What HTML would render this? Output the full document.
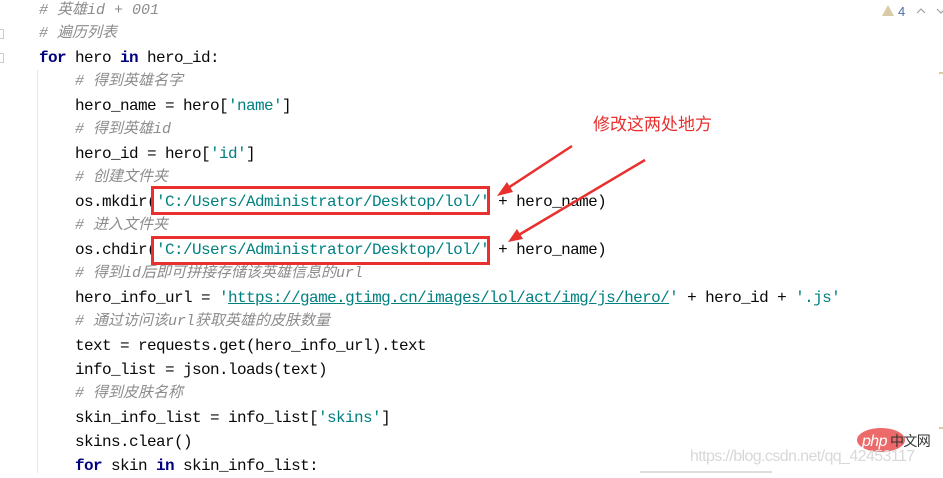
<!DOCTYPE html>
<html><head><meta charset="utf-8"><style>
body{margin:0;width:943px;height:473px;overflow:hidden;background:#fff;position:relative;font-family:"Liberation Mono","Noto Sans CJK SC",monospace;font-size:16px;letter-spacing:-0.6px;color:#080808}
.l{position:absolute;white-space:pre;height:24px;line-height:24px}
.c{color:#8c8c8c;font-style:italic;font-size:15px;letter-spacing:0}
.k{color:#000080;font-weight:bold}
.s{color:#008080}
.u{color:#008080;text-decoration:underline}
.box{position:absolute;border:3px solid #e8302e;box-sizing:border-box}
.guide{position:absolute;left:37px;top:70px;width:1px;height:403px;background:#e6e6e6}
</style></head><body>
<div class="guide"></div>
<div style="position:absolute;left:0;top:29px;width:3px;height:8px;border:1px solid #ccc;border-left:none"></div>
<div style="position:absolute;left:0;top:53px;width:3px;height:8px;border:1px solid #ccc;border-left:none"></div>
<div class="l c" style="left:39px;top:-1px"># 英雄id + 001</div>
<div class="l c" style="left:39px;top:22px"># 遍历列表</div>
<div class="l" style="left:39px;top:46px"><span class="k">for</span> hero <span class="k">in</span> hero_id:</div>
<div class="l c" style="left:75px;top:70px"># 得到英雄名字</div>
<div class="l" style="left:75px;top:94px">hero_name = hero[<span class="s">'name'</span>]</div>
<div class="l c" style="left:75px;top:118px"># 得到英雄id</div>
<div class="l" style="left:75px;top:142px">hero_id = hero[<span class="s">'id'</span>]</div>
<div class="l c" style="left:75px;top:166px"># 创建文件夹</div>
<div class="l" style="left:75px;top:190px">os.mkdir(<span class="s">'C:/Users/Administrator/Desktop/lol/'</span> + hero_name)</div>
<div class="l c" style="left:75px;top:214px"># 进入文件夹</div>
<div class="l" style="left:75px;top:238px">os.chdir(<span class="s">'C:/Users/Administrator/Desktop/lol/'</span> + hero_name)</div>
<div class="l c" style="left:75px;top:262px"># 得到id后即可拼接存储该英雄信息的url</div>
<div class="l" style="left:75px;top:286px">hero_info_url = <span class="s">'</span><span class="u">https://game.gtimg.cn/images/lol/act/img/js/hero/</span><span class="s">'</span> + hero_id + <span class="s">'.js'</span></div>
<div class="l c" style="left:75px;top:310px"># 通过访问该url获取英雄的皮肤数量</div>
<div class="l" style="left:75px;top:334px">text = requests.get(hero_info_url).text</div>
<div class="l" style="left:75px;top:358px">info_list = json.loads(text)</div>
<div class="l c" style="left:75px;top:382px"># 得到皮肤名称</div>
<div class="l" style="left:75px;top:406px">skin_info_list = info_list[<span class="s">'skins'</span>]</div>
<div class="l" style="left:75px;top:430px">skins.clear()</div>
<div class="l" style="left:75px;top:454px"><span class="k">for</span> skin <span class="k">in</span> skin_info_list:</div>
<div class="box" style="left:151px;top:186px;width:339px;height:29px"></div>
<div class="box" style="left:151px;top:236px;width:339px;height:29px"></div>
<div style="position:absolute;left:593px;top:110px;font-family:'Liberation Sans','Noto Sans CJK SC',sans-serif;font-size:17px;letter-spacing:0;color:#e8302e">修改这两处地方</div>
<svg width="943" height="473" style="position:absolute;left:0;top:0">
<g stroke="#e8302e" stroke-width="2.5" fill="#e8302e">
<line x1="572" y1="146" x2="505" y2="190"/>
<polygon points="497,196 507,182 513,192" stroke="none"/>
<line x1="645" y1="160" x2="517" y2="236"/>
<polygon points="508,242 517,229 523,239" stroke="none"/>
</g>
<polygon points="888,5 882,16 894,16" fill="#d9cba5"/>
<text x="898" y="16" font-family="Liberation Sans" font-size="13" fill="#4a6fa5">4</text>
<path d="M917 13 l4 -4 l4 4" stroke="#999" fill="none"/>
<path d="M937 9 l4 4 l4 -4" stroke="#999" fill="none"/>
<rect x="939" y="72" width="4" height="2" fill="#d9cba5"/>
<rect x="939" y="427" width="4" height="2" fill="#d9cba5"/>
<ellipse cx="881" cy="440" rx="24" ry="12" fill="#ec6a6a"/>
<text x="862" y="446" font-family="Liberation Sans" font-style="italic" font-size="16" fill="#fff">php</text>
<text x="890" y="446" font-family="Noto Sans CJK SC" font-size="14" fill="#333">中文网</text>
<text x="690" y="461" font-family="Liberation Sans" font-size="16" fill="#d8d8d8">https://blog.csdn.net/qq_42453117</text>
<rect x="640" y="471" width="132" height="2" fill="#ddd"/>
</svg>
</body></html>
